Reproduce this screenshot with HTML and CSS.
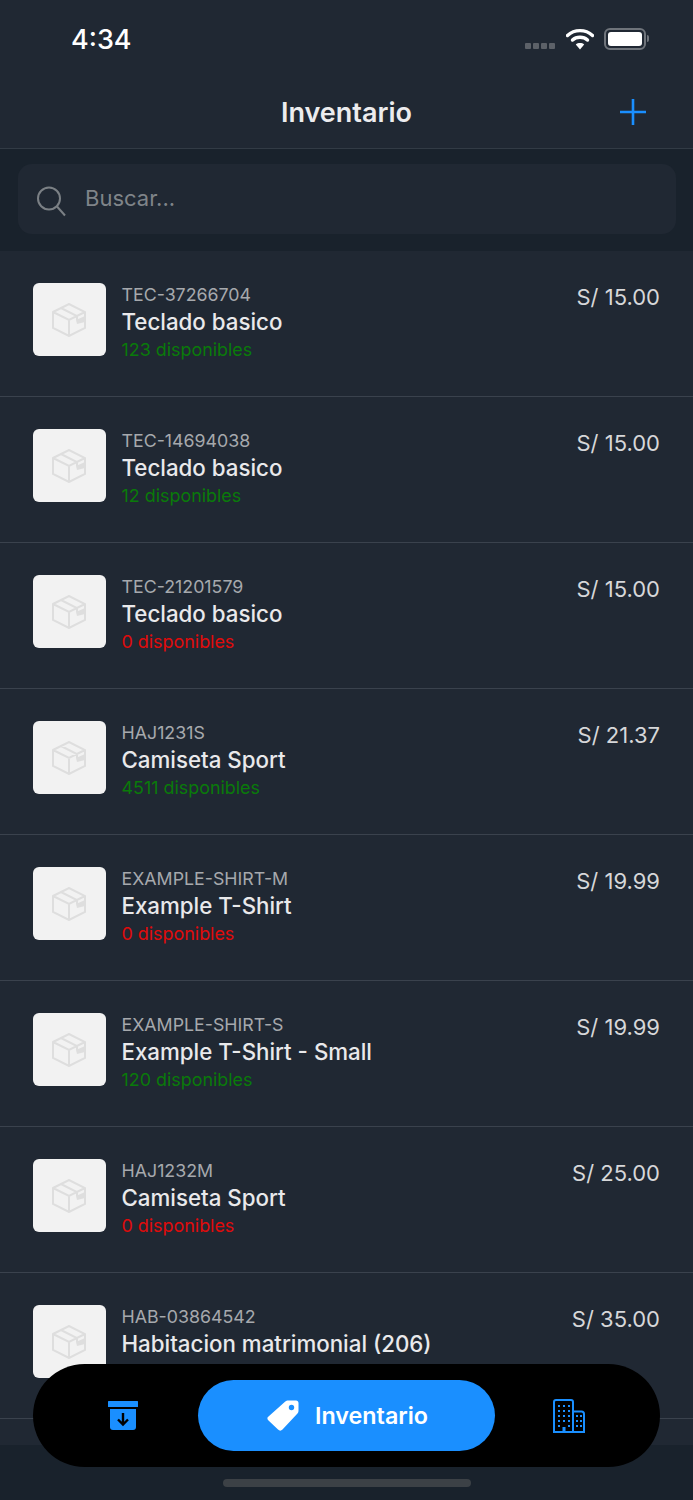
FILE: index.html
```html
<!DOCTYPE html>
<html>
<head>
<meta charset="utf-8">
<title>Inventario</title>
<link rel="stylesheet" href="styles.css">
</head>
<body>

<div class="screen">

  <div class="status-bar">
    <span class="time">4:34</span>
    <div class="status-icons">
      <div class="signal"><i></i><i></i><i></i><i></i></div>
      <svg class="wifi" width="28" height="22" viewBox="0 0 28 22">
        <path d="M1.5 7.5C8.5 1 19.500 1 26.500 7.500" fill="none" stroke="#fff" stroke-width="3.400" stroke-linecap="round"/>
        <path d="M6.500 12C10.500 8.300 17.500 8.300 21.500 12" fill="none" stroke="#fff" stroke-width="3.400" stroke-linecap="round"/>
        <path d="M14 21.500L9.800 16.500C12 14.600 16 14.600 18.200 16.500Z" fill="#fff"/>
      </svg>
      <div class="battery"><div class="battery-level"></div></div>
      <div class="battery-cap"></div>
    </div>
  </div>

  <div class="nav-bar">
    <h1 class="nav-title">Inventario</h1>
    <svg class="nav-add" width="26" height="26" viewBox="0 0 26 26">
      <path d="M13 0V26M0 13H26" stroke="#1a8fff" stroke-width="2.600"/>
    </svg>
  </div>

  <div class="search-band">
    <div class="search-box">
      <svg width="32" height="32" viewBox="0 0 32 32">
        <circle cx="14" cy="13.500" r="11" fill="none" stroke="#7b8085" stroke-width="2"/>
        <path d="M22 21.500L30 30.500" stroke="#7b8085" stroke-width="2"/>
      </svg>
      <span class="search-text">Buscar...</span>
    </div>
  </div>

  <div class="list">

    <div class="row">
      <div class="thumb"><svg class="box-icon" viewBox="0 0 34 34"><use href="#box"/></svg></div>
      <div class="info">
        <div class="sku">TEC-37266704</div>
        <div class="name">Teclado basico</div>
        <div class="stock in">123 disponibles</div>
      </div>
      <div class="price">S/ 15.00</div>
    </div>

    <div class="row">
      <div class="thumb"><svg class="box-icon" viewBox="0 0 34 34"><use href="#box"/></svg></div>
      <div class="info">
        <div class="sku">TEC-14694038</div>
        <div class="name">Teclado basico</div>
        <div class="stock in">12 disponibles</div>
      </div>
      <div class="price">S/ 15.00</div>
    </div>

    <div class="row">
      <div class="thumb"><svg class="box-icon" viewBox="0 0 34 34"><use href="#box"/></svg></div>
      <div class="info">
        <div class="sku">TEC-21201579</div>
        <div class="name">Teclado basico</div>
        <div class="stock out">0 disponibles</div>
      </div>
      <div class="price">S/ 15.00</div>
    </div>

    <div class="row">
      <div class="thumb"><svg class="box-icon" viewBox="0 0 34 34"><use href="#box"/></svg></div>
      <div class="info">
        <div class="sku">HAJ1231S</div>
        <div class="name">Camiseta Sport</div>
        <div class="stock in">4511 disponibles</div>
      </div>
      <div class="price">S/ 21.37</div>
    </div>

    <div class="row">
      <div class="thumb"><svg class="box-icon" viewBox="0 0 34 34"><use href="#box"/></svg></div>
      <div class="info">
        <div class="sku">EXAMPLE-SHIRT-M</div>
        <div class="name">Example T-Shirt</div>
        <div class="stock out">0 disponibles</div>
      </div>
      <div class="price">S/ 19.99</div>
    </div>

    <div class="row">
      <div class="thumb"><svg class="box-icon" viewBox="0 0 34 34"><use href="#box"/></svg></div>
      <div class="info">
        <div class="sku">EXAMPLE-SHIRT-S</div>
        <div class="name">Example T-Shirt - Small</div>
        <div class="stock in">120 disponibles</div>
      </div>
      <div class="price">S/ 19.99</div>
    </div>

    <div class="row">
      <div class="thumb"><svg class="box-icon" viewBox="0 0 34 34"><use href="#box"/></svg></div>
      <div class="info">
        <div class="sku">HAJ1232M</div>
        <div class="name">Camiseta Sport</div>
        <div class="stock out">0 disponibles</div>
      </div>
      <div class="price">S/ 25.00</div>
    </div>

    <div class="row">
      <div class="thumb"><svg class="box-icon" viewBox="0 0 34 34"><use href="#box"/></svg></div>
      <div class="info">
        <div class="sku">HAB-03864542</div>
        <div class="name">Habitacion matrimonial (206)</div>
      </div>
      <div class="price">S/ 35.00</div>
    </div>

  </div>

  <div class="tab-bar">
    <div class="tab">
      <svg width="32" height="32" viewBox="0 0 32 32">
        <rect x="1" y="1" width="30" height="6" rx="0.500" fill="#1a8fff"/>
        <path d="M3 9H29V27C29 29 28 30 26 30H6C4 30 3 29 3 27Z" fill="#1a8fff"/>
        <path d="M16 13V24M11 19.500L16 24.500L21 19.500" fill="none" stroke="#000" stroke-width="2.400"/>
      </svg>
    </div>
    <div class="tab-active">
      <svg width="34" height="34" viewBox="0 0 34 34">
        <path d="M22.500 1.500H30C31.500 1.500 32.500 2.500 32.500 4V11.500C32.500 13 32 14 31 15L16.500 30.500C15 32 13.500 32 12 30.500L2.500 21.500C1 20 1 18.500 2.500 17.500L19 2.800C20 1.900 21 1.500 22.500 1.500Z" fill="#fff"/>
        <circle cx="25.500" cy="8.500" r="2.700" fill="#1a8fff"/>
      </svg>
      <span>Inventario</span>
    </div>
    <div class="tab">
      <svg width="32" height="34" viewBox="0 0 32 34">
        <path d="M1 33V3C1 2 2 1 3 1H18C19 1 20 2 20 3V33ZM20 12.500H28.500C30 12.500 31 13.500 31 15V33H1" fill="none" stroke="#1a8fff" stroke-width="2"/>
        <path d="M5 6h2v2H5zM10 6h2v2h-2zM15 6h2v2h-2zM5 11h2v2H5zM10 11h2v2h-2zM15 11h2v2h-2zM5 16h2v2H5zM10 16h2v2h-2zM15 16h2v2h-2zM5 21h2v2H5zM10 21h2v2h-2zM15 21h2v2h-2zM5 26h2v2H5zM15 26h2v2h-2zM9.500 28h3v5h-3zM23 16h2v2h-2zM27 16h2v2h-2zM23 21h2v2h-2zM27 21h2v2h-2zM23 26h2v2h-2zM27 26h2v2h-2z" fill="#1a8fff"/>
      </svg>
    </div>
  </div>

  <div class="home-indicator"></div>

</div>

<svg class="defs" width="0" height="0">
  <symbol id="box" viewBox="0 0 34 34">
    <path d="M1 9L17 1L33 9V25L17 33L1 25ZM1 9L17 17L33 9M17 17V33M9 5L25 13V17" fill="none" stroke="#dedede" stroke-width="2"/>
    <path d="M24 17L33 13V19L25 21Z" fill="#dedede"/>
  </symbol>
</svg>

</body>
</html>
```

FILE: styles.css
```css
* {
  box-sizing: border-box;
}

html, body {
  margin: 0;
  padding: 0;
  background: #19222c;
}

body {
  font-family: Inter, "Liberation Sans", sans-serif;
  overflow: hidden;
}

.screen {
  position: relative;
  width: 693px;
  height: 1500px;
  overflow: hidden;
  background: #19222c;
}

.defs {
  position: absolute;
}

.status-bar {
  height: 78px;
  background: #202833;
  display: flex;
  justify-content: space-between;
  align-items: flex-start;
  padding: 23px 44px 0 71px;
}

.time {
  color: #fff;
  font-size: 27px;
  line-height: 33px;
  font-weight: 500;
}

.status-icons {
  display: flex;
  align-items: flex-start;
  padding-top: 5px;
}

.signal {
  display: flex;
  gap: 2px;
  margin: 15px 11px 0 0;
}

.signal i {
  display: block;
  width: 6px;
  height: 6px;
  border-radius: 1px;
  background: #5c6168;
}

.wifi {
  margin: 0 10px 0 0;
}

.battery {
  width: 42px;
  height: 22px;
  border: 2px solid #6f747b;
  border-radius: 6px;
  padding: 2px;
}

.battery-level {
  height: 100%;
  background: #fff;
  border-radius: 3px;
}

.battery-cap {
  width: 2px;
  height: 7px;
  margin: 7px 0 0 1px;
  background: #6f747b;
  border-radius: 0 2px 2px 0;
}

.nav-bar {
  position: relative;
  height: 71px;
  background: #202833;
  border-bottom: 1px solid #323b45;
  display: flex;
  justify-content: center;
  align-items: center;
}

.nav-title {
  margin: 0;
  color: #ececee;
  font-size: 27px;
  line-height: 32px;
  font-weight: 600;
}

.nav-add {
  position: absolute;
  right: 47px;
  top: 21px;
}

.search-band {
  height: 102px;
  padding: 15px 17px 17px 18px;
}

.search-box {
  height: 70px;
  border-radius: 14px;
  background: #202833;
  display: flex;
  align-items: center;
  gap: 18px;
  padding: 0 0 0 17px;
}

.search-box svg {
  margin-top: 3px;
}

.search-text {
  color: #7f8489;
  font-size: 22px;
  margin-top: -2px;
}

.list {
  height: 1194px;
  overflow: hidden;
  background: #202833;
}

.row {
  height: 146px;
  border-bottom: 1px solid #3a424d;
  display: flex;
  align-items: flex-start;
  padding: 32px 33px 0 32.500px;
}

.thumb {
  width: 73px;
  height: 73px;
  flex: none;
  border-radius: 6px;
  background: #f2f2f2;
  display: flex;
  justify-content: center;
  align-items: center;
}

.box-icon {
  width: 34px;
  height: 34px;
}

.info {
  flex: 1;
  margin-left: 16px;
  padding-top: 1px;
}

.sku {
  color: #a6a9ad;
  font-size: 17.800px;
  line-height: 22px;
}

.name {
  color: #e9e9eb;
  font-size: 22.300px;
  line-height: 33px;
  font-weight: 500;
  margin-top: -1px;
}

.stock {
  font-size: 17.900px;
  line-height: 24px;
}

.stock.in {
  color: #0a7a0a;
}

.stock.out {
  color: #e00b0b;
}

.price {
  color: #d6d7d9;
  font-size: 22px;
  line-height: 30px;
  margin-top: -1px;
}

.tab-bar {
  position: absolute;
  left: 33px;
  top: 1364px;
  width: 627px;
  height: 103px;
  border-radius: 52px;
  background: #000;
  display: flex;
  align-items: center;
  justify-content: space-between;
  padding: 0 75px 0 74px;
}

.tab {
  width: 32px;
  display: flex;
  justify-content: center;
}

.tab-active {
  width: 297px;
  height: 71px;
  border-radius: 36px;
  background: #1a8fff;
  color: #fff;
  font-size: 23.300px;
  font-weight: 600;
  display: flex;
  justify-content: center;
  align-items: center;
  gap: 15px;
  padding-left: 2px;
}

.home-indicator {
  position: absolute;
  left: 223px;
  top: 1479px;
  width: 248px;
  height: 8px;
  border-radius: 4px;
  background: #3c4146;
}
```
